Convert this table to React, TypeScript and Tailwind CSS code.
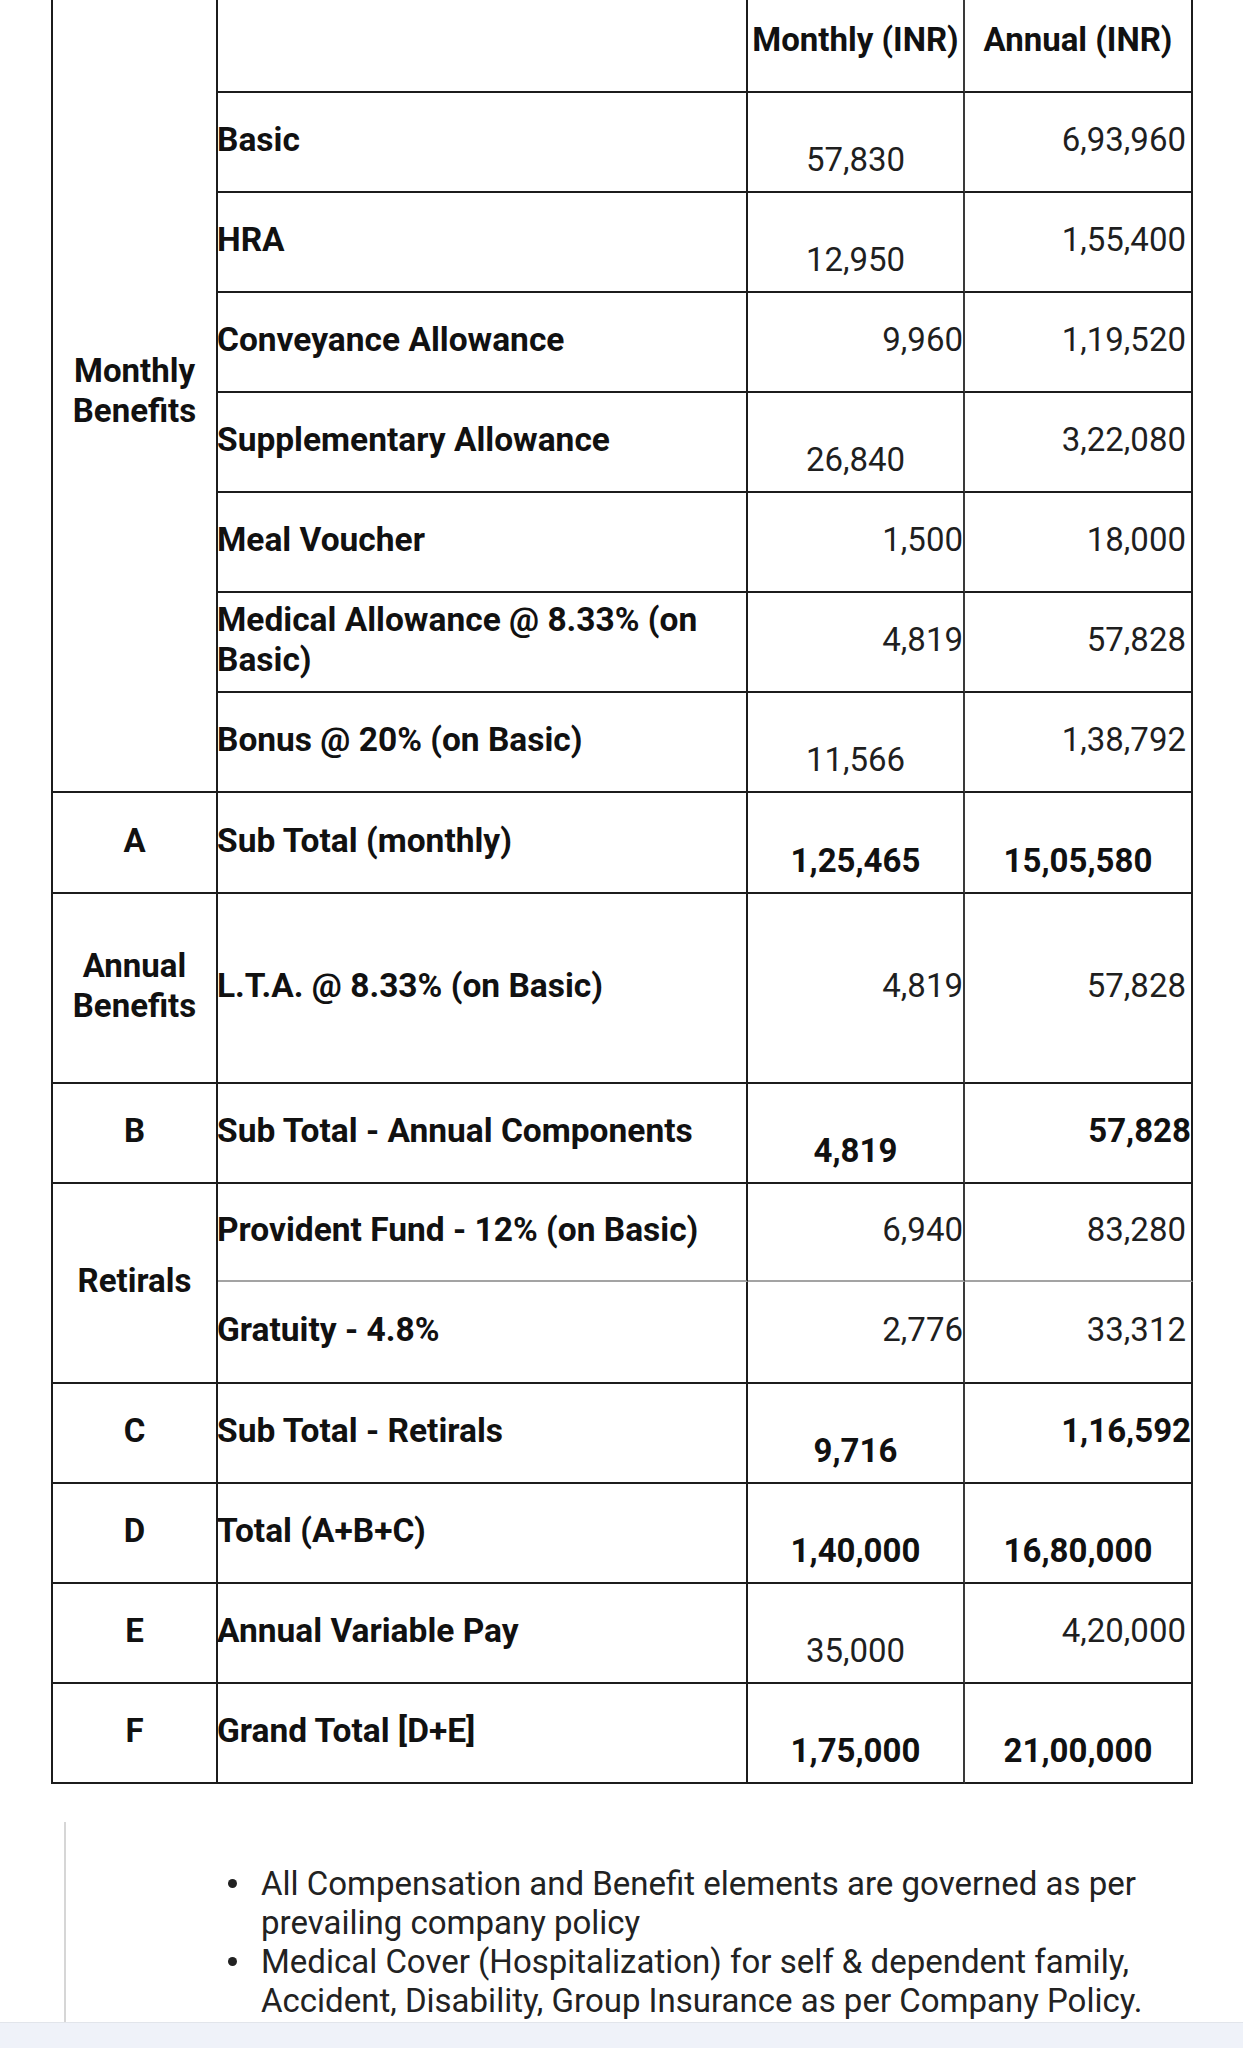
type Pos = "low" | "right";

interface Val {
  v: string;
  pos: Pos;
  bold?: boolean;
}

interface Row {
  label: React.ReactNode;
  m: Val;
  a: Val;
}

const monthlyRows: Row[] = [
  { label: "Basic", m: { v: "57,830", pos: "low" }, a: { v: "6,93,960", pos: "right" } },
  { label: "HRA", m: { v: "12,950", pos: "low" }, a: { v: "1,55,400", pos: "right" } },
  { label: "Conveyance Allowance", m: { v: "9,960", pos: "right" }, a: { v: "1,19,520", pos: "right" } },
  { label: "Supplementary Allowance", m: { v: "26,840", pos: "low" }, a: { v: "3,22,080", pos: "right" } },
  { label: "Meal Voucher", m: { v: "1,500", pos: "right" }, a: { v: "18,000", pos: "right" } },
  {
    label: "Medical Allowance @ 8.33% (on Basic)",
    m: { v: "4,819", pos: "right" },
    a: { v: "57,828", pos: "right" },
  },
  { label: "Bonus @ 20% (on Basic)", m: { v: "11,566", pos: "low" }, a: { v: "1,38,792", pos: "right" } },
];

const border = "border-r-2 border-b-2 border-[#1c1c1c]";

function Label({ children, gray }: { children: React.ReactNode; gray?: boolean }) {
  return (
    <div
      className={`flex items-center pb-1 pr-2 text-[33.5px] leading-[40px] font-bold text-[#111] ${
        gray ? "border-r-2 border-b-2 border-r-[#1c1c1c] border-b-[#a3a3a3]" : border
      }`}
    >
      <span className="-ml-px">{children}</span>
    </div>
  );
}

function Value({ val, annual, gray }: { val: Val; annual?: boolean; gray?: boolean }) {
  const weight = val.bold ? "font-bold text-[#111]" : "font-normal text-[#1f1f1f]";
  const place =
    val.pos === "low"
      ? "justify-center pt-[36px]"
      : annual && !val.bold
        ? "justify-end pb-1 pr-[5px]"
        : "justify-end pb-1 pr-0";
  const lines = gray
    ? `border-b-2 border-b-[#a3a3a3] ${annual ? "border-r-2 border-r-[#1c1c1c]" : "border-r-2 border-r-[#3a3a3a]"}`
    : annual
      ? border
      : "border-r-2 border-b-2 border-r-[#3a3a3a] border-b-[#1c1c1c]";
  return (
    <div className={`flex items-center text-[33px] leading-[40px] ${weight} ${place} ${lines}`}>
      {val.v}
    </div>
  );
}

function Section({ children }: { children: React.ReactNode }) {
  return (
    <div className={`flex items-center justify-center pb-1 text-center text-[33px] leading-[40px] font-bold text-[#111] ${border}`}>
      <span>{children}</span>
    </div>
  );
}

function SubRow({ letter, row }: { letter: string; row: Row }) {
  return (
    <>
      <Section>{letter}</Section>
      <Label>{row.label}</Label>
      <Value val={row.m} />
      <Value val={row.a} annual />
    </>
  );
}

function Bullet({ children }: { children: React.ReactNode }) {
  return (
    <li className="flex">
      <span className="flex h-[39px] w-[40px] shrink-0 items-center pl-[7px]">
        <span className="h-[9px] w-[9px] rounded-full bg-[#222]" />
      </span>
      <span>{children}</span>
    </li>
  );
}

export default function App() {
  return (
    <div className="min-h-[2048px] bg-white font-['Roboto',sans-serif]">
      <div className="ml-[51px] -mt-[10px] grid w-[1142px] grid-cols-[165px_530px_217px_228px] grid-rows-[101px_repeat(7,100px)_101px_190px_100px_98px_102px_repeat(4,100px)] border-t-2 border-l-2 border-[#1c1c1c]">
        <div className={`row-span-8 flex items-center justify-center pb-1 pt-[2px] text-center text-[33px] leading-[40px] font-bold text-[#111] ${border}`}>
          <span>
            Monthly
            <br />
            Benefits
          </span>
        </div>

        <div className={border} />
        <div className="flex items-center justify-center pb-1 text-[33px] leading-[40px] font-bold text-[#111] whitespace-nowrap border-r-2 border-b-2 border-r-[#3a3a3a] border-b-[#1c1c1c]">
          Monthly (INR)
        </div>
        <div className={`flex items-center justify-center pb-1 text-[33px] leading-[40px] font-bold text-[#111] whitespace-nowrap ${border}`}>
          Annual (INR)
        </div>

        {monthlyRows.map((row, i) => (
          <div key={i} className="contents">
            <Label>{row.label}</Label>
            <Value val={row.m} />
            <Value val={row.a} annual />
          </div>
        ))}

        <SubRow
          letter="A"
          row={{
            label: "Sub Total (monthly)",
            m: { v: "1,25,465", pos: "low", bold: true },
            a: { v: "15,05,580", pos: "low", bold: true },
          }}
        />

        <Section>
          Annual
          <br />
          Benefits
        </Section>
        <Label>L.T.A. @ 8.33% (on Basic)</Label>
        <Value val={{ v: "4,819", pos: "right" }} />
        <Value val={{ v: "57,828", pos: "right" }} annual />

        <SubRow
          letter="B"
          row={{
            label: "Sub Total - Annual Components",
            m: { v: "4,819", pos: "low", bold: true },
            a: { v: "57,828", pos: "right", bold: true },
          }}
        />

        <div className={`row-span-2 flex items-center justify-center pb-1 text-center text-[33px] leading-[40px] font-bold text-[#111] ${border}`}>
          Retirals
        </div>
        <Label gray>Provident Fund - 12% (on Basic)</Label>
        <Value val={{ v: "6,940", pos: "right" }} gray />
        <Value val={{ v: "83,280", pos: "right" }} annual gray />
        <Label>Gratuity - 4.8%</Label>
        <Value val={{ v: "2,776", pos: "right" }} />
        <Value val={{ v: "33,312", pos: "right" }} annual />

        <SubRow
          letter="C"
          row={{
            label: "Sub Total - Retirals",
            m: { v: "9,716", pos: "low", bold: true },
            a: { v: "1,16,592", pos: "right", bold: true },
          }}
        />
        <SubRow
          letter="D"
          row={{
            label: "Total (A+B+C)",
            m: { v: "1,40,000", pos: "low", bold: true },
            a: { v: "16,80,000", pos: "low", bold: true },
          }}
        />
        <SubRow
          letter="E"
          row={{
            label: "Annual Variable Pay",
            m: { v: "35,000", pos: "low" },
            a: { v: "4,20,000", pos: "right" },
          }}
        />
        <SubRow
          letter="F"
          row={{
            label: "Grand Total [D+E]",
            m: { v: "1,75,000", pos: "low", bold: true },
            a: { v: "21,00,000", pos: "low", bold: true },
          }}
        />
      </div>

      <div className="ml-[64px] mt-[38px] h-[200px] border-l-2 border-[#d6d6d6] pt-[42px] pl-[155px]">
        <ul className="text-[33px] leading-[39px] text-[#222]">
          <Bullet>
            All Compensation and Benefit elements are governed as per
            <br />
            prevailing company policy
          </Bullet>
          <Bullet>
            Medical Cover (Hospitalization) for self &amp; dependent family,
            <br />
            Accident, Disability, Group Insurance as per Company Policy.
          </Bullet>
        </ul>
      </div>

      <div className="h-[40px] border-t border-[#e2e5eb] bg-[#eff2f9]" />
    </div>
  );
}
